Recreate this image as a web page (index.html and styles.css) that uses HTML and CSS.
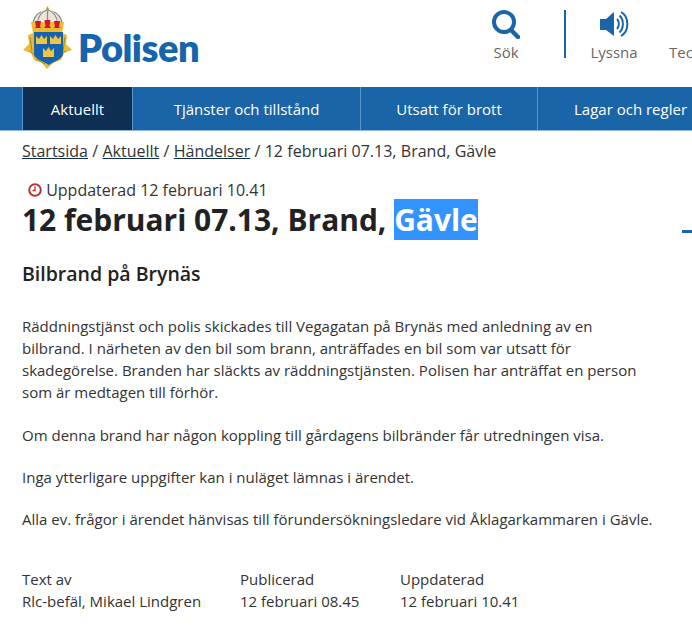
FILE: index.html
```html
<!DOCTYPE html>
<html lang="sv">
    <head>
        <title>12 februari 07.13, Brand, Gävle</title>
        <meta charset="UTF-8">
        <link rel="stylesheet" href="styles.css">
    </head>
    <body>
        <header class="top">
            <a class="logo">
                <svg class="crest" width="50" height="64" viewBox="0 0 50 64">
                    <!-- gold wreath -->
                    <path fill="#ecbb2e" d="M10 27 L5 29 L6 38 L0 44 L8 47 L11 54 L19 57 L24 63 L30 57 L38 54 L41 47 L49 44 L43 38 L44 29 L39 27 Z"/>
                    <path fill="none" stroke="#a9861e" stroke-width="1" d="M7 31 L9 45 M42 31 L40 45 M6 45 L14 50 M43 45 L35 50 M13 53 L22 58 M36 53 L27 58"/>
                    <!-- crown -->
                    <path fill="#e9e6da" d="M24.500 3 C32 4 38 9 40 17 L9 17 C11 9 17 4 24.500 3 Z"/>
                    <path fill="none" stroke="#8a8f80" stroke-width="1.300" d="M24.500 3 V17 M24 4 C18 6 15 11 14.500 17 M25 4 C31 6 34 11 34.500 17 M18 6 C13 8 11 12 10 17 M31 6 C36 8 38 12 39 17"/>
                    <path fill="#c89b1f" d="M24.500 0 L26 3 L24.500 6 L23 3 Z"/>
                    <path fill="#ecbb2e" d="M8 16 H41 L39 27 H10 Z"/>
                    <path fill="#d5123d" d="M12 15 H18 L17 21 L18.500 22 H11.500 L13 21 Z M21.500 14 H27.500 L26.500 20 L28 22 H21 L22.500 20 Z M31 15 H37 L36 21 L37.500 22 H30.500 L32 21 Z"/>
                    <!-- shield -->
                    <path fill="#1763ad" d="M11 26 H40 V48 C40 53 31 55 25.500 59 C20 55 11 53 11 48 Z"/>
                    <g fill="#eec643">
                        <path d="M13 30 L16 33 L18.500 29 L21 33 L24 30 V38 H13 Z"/>
                        <path d="M27 30 L30 33 L32.500 29 L35 33 L38 30 V38 H27 Z"/>
                        <path d="M20 42 L23 45 L25.500 41 L28 45 L31 42 V51 H20 Z"/>
                    </g>
                </svg>
                <span class="logo-text">Polisen</span>
            </a>
            <div class="tools">
                <a class="tool tool-search">
                    <svg width="28" height="29" viewBox="0 0 28 29">
                        <circle cx="12" cy="12" r="10" fill="none" stroke="#1a64a8" stroke-width="4"/>
                        <path d="M19 20 L26 27" stroke="#1a64a8" stroke-width="4.500" stroke-linecap="round"/>
                    </svg>
                    <span>Sök</span>
                </a>
                <a class="tool tool-listen">
                    <svg width="29" height="29" viewBox="0 0 29 29">
                        <path fill="#1a64a8" d="M0 9 H6 L14 2 V26 L6 20 H0 Z"/>
                        <path fill="none" stroke="#1a64a8" stroke-width="2" d="M17 9 C19.500 11.500 19.500 16.500 17 19 M19.500 5.500 C24 9.500 24 18.500 19.500 22.500 M21 2 C29.500 7 29.500 21 21 26"/>
                    </svg>
                    <span>Lyssna</span>
                </a>
                <a class="tool tool-sign"><svg width="29" height="29"></svg><span>Teckenspråk</span></a>
            </div>
        </header>

        <nav class="nav">
            <a class="nav-item active">Aktuellt</a>
            <a class="nav-item services">Tjänster och tillstånd</a>
            <a class="nav-item crime">Utsatt för brott</a>
            <a class="nav-item">Lagar och regler</a>
        </nav>

        <main class="content">
            <div class="crumbs">
                <a>Startsida</a> / <a>Aktuellt</a> / <a>Händelser</a> / 12 februari 07.13, Brand, Gävle
            </div>

            <div class="updated">
                <svg width="14" height="14" viewBox="0 0 14 14">
                    <circle cx="7" cy="7" r="5.800" fill="none" stroke="#b5332e" stroke-width="2"/>
                    <path d="M7 3.500 V7.500 H4.500" fill="none" stroke="#b5332e" stroke-width="1.300"/>
                </svg>
                Uppdaterad 12 februari 10.41
            </div>
            <h1>12 februari 07.13, Brand, <span class="selected">Gävle</span></h1>
            <span class="edge-mark"></span>

            <h2>Bilbrand på Brynäs</h2>

            <p>Räddningstjänst och polis skickades till Vegagatan på Brynäs med anledning av en bilbrand. I närheten av den bil som brann, anträffades en bil som var utsatt för skadegörelse. Branden har släckts av räddningstjänsten. Polisen har anträffat en person som är medtagen till förhör.</p>
            <p>Om denna brand har någon koppling till gårdagens bilbränder får utredningen visa.</p>
            <p>Inga ytterligare uppgifter kan i nuläget lämnas i ärendet.</p>
            <p>Alla ev. frågor i ärendet hänvisas till förundersökningsledare vid Åklagarkammaren i Gävle.</p>

            <div class="byline">
                <div class="by-author">Text av<br>Rlc-befäl, Mikael Lindgren</div>
                <div class="by-published">Publicerad<br>12 februari 08.45</div>
                <div>Uppdaterad<br>12 februari 10.41</div>
            </div>
        </main>
    </body>
</html>
```

FILE: styles.css
```css
html, body{height:100%;}

body{
    margin:0;
    overflow:hidden;
    position:relative;
    background:#fff;
    color:#333;
    font-family:"Open Sans", sans-serif;
    font-size:15px;
    line-height:22.2px;
}

.top{
    display:flex;
    height:87px;
    padding-left:23px;
    white-space:nowrap;
}

.logo{
    display:flex;
    align-items:flex-start;
    padding-top:6px;
    width:469px;
    flex:none;
}

.crest{flex:none;}

.logo-text{
    margin:19px 0 0 5px;
    font-family:"Lato", sans-serif;
    font-weight:800;
    font-size:38px;
    line-height:44px;
    letter-spacing:-0.5px;
    color:#1465ad;
}

.tools{
    display:flex;
    align-items:flex-start;
    padding-top:10px;
    color:#666;
    font-size:15px;
}

.tool{
    display:flex;
    flex-direction:column;
    align-items:center;
    flex:none;
    gap:3px;
}

.tool svg{flex:none;}

.tool span{line-height:20px;}

.tool-search{
    width:28px;
    height:48px;
    padding-right:44px;
    border-right:2px solid #1a64a8;
}

.tool-listen{
    width:46px;
    margin:0 32px 0 25px;
}

.tool-sign{align-items:flex-start;}

.nav{
    display:flex;
    height:43px;
    padding-left:22px;
    background:#1a64a8;
    border-bottom:1px solid #8db4dc;
    white-space:nowrap;
}

.nav-item{
    display:flex;
    align-items:center;
    justify-content:center;
    flex:none;
    padding:1px 0 0;
    box-sizing:border-box;
    border-left:1px solid #5a93cf;
    color:#fff;
    font-size:15px;
}

.nav-item.active{
    width:110px;
    background:#0e2f52;
}

.nav-item.services{width:228px;}

.nav-item.crime{width:177px;}

.nav-item:last-child{padding-left:36px;}

.content{padding:9px 22px 0;}

.crumbs{
    font-size:16px;
    line-height:22px;
    word-spacing:0.15px;
}

.crumbs a{
    color:#333;
    text-decoration:underline;
    text-decoration-color:#0e2f52;
}

.updated{
    margin:17px 0 0 6px;
    font-size:16px;
    line-height:22px;
}

.updated svg{vertical-align:-1px;}

h1{
    margin:0;
    color:#222;
    font-size:29.950px;
    font-weight:700;
    line-height:38px;
    white-space:nowrap;
}

.selected{
    background:#3393ff;
    color:#fff;
}

.edge-mark{
    position:absolute;
    top:230px;
    left:682px;
    width:10px;
    height:3px;
    background:#1a64a8;
}

h2{
    margin:23px 0 28.800px;
    color:#222;
    font-size:19.500px;
    font-weight:600;
    line-height:24px;
}

p{
    margin:0 0 20px;
    max-width:632px;
}

.byline{
    display:flex;
    margin-top:38px;
    line-height:22px;
}

.by-author{width:218px;}

.by-published{width:160px;}
```
